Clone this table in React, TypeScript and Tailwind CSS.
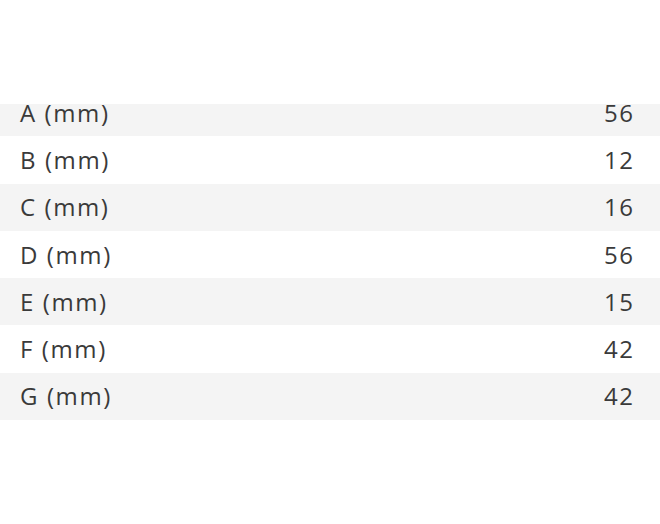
import React from "react";

const rows: [string, string][] = [
  ["A (mm)", "56"],
  ["B (mm)", "12"],
  ["C (mm)", "16"],
  ["D (mm)", "56"],
  ["E (mm)", "15"],
  ["F (mm)", "42"],
  ["G (mm)", "42"],
];

export default function App() {
  return (
    <div className="w-[660px] h-[524px] bg-white" style={{ fontFamily: '"Open Sans", sans-serif' }}>
      <div className="pt-[104px]">
        <div className="overflow-hidden">
          <div className="-mt-[15px]">
            {rows.map(([k, v], i) => (
              <div
                key={k}
                className={`flex items-center justify-between h-[47.3px] pl-[20px] pr-[27px] text-[24px] tracking-[1.6px] text-[#3a3a3a] ${i % 2 === 0 ? "bg-[#f4f4f4]" : "bg-white"}`}
              >
                <span>{k}</span>
                <span className="-mr-[1.6px]">{v}</span>
              </div>
            ))}
          </div>
        </div>
      </div>
    </div>
  );
}
